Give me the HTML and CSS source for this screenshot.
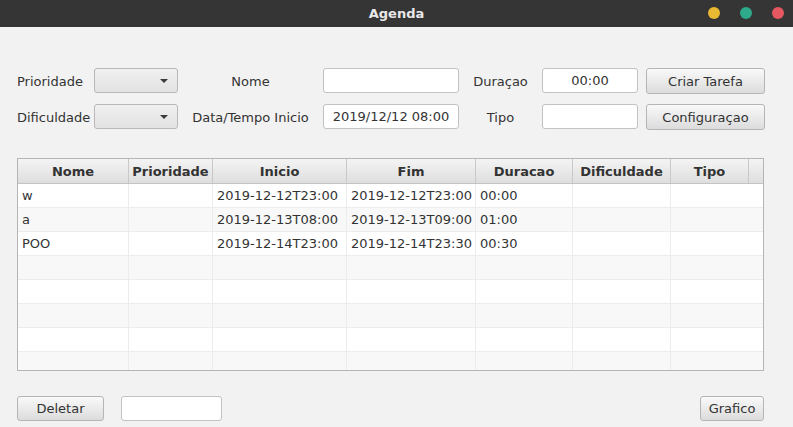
FILE: index.html
```html
<!DOCTYPE html>
<html lang="pt">
<head>
<meta charset="utf-8">
<title>Agenda</title>
<link rel="stylesheet" href="styles.css">
</head>
<body>
<div class="window">
  <header class="titlebar">
    <span class="title">Agenda</span>
    <div class="controls">
      <span class="dot dot-min"></span>
      <span class="dot dot-max"></span>
      <span class="dot dot-close"></span>
    </div>
  </header>

  <main class="content">
    <section class="form">
      <span class="lbl lbl-left">Prioridade</span>
      <div class="combo"><span class="arrow"></span></div>
      <span class="lbl lbl-center">Nome</span>
      <div class="field"></div>
      <span class="lbl lbl-center">Duraçao</span>
      <div class="field">00:00</div>
      <button class="btn">Criar Tarefa</button>

      <span class="lbl lbl-left">Dificuldade</span>
      <div class="combo"><span class="arrow"></span></div>
      <span class="lbl lbl-center">Data/Tempo Inicio</span>
      <div class="field">2019/12/12 08:00</div>
      <span class="lbl lbl-center">Tipo</span>
      <div class="field"></div>
      <button class="btn">Configuraçao</button>
    </section>

    <section class="table">
      <div class="row head">
        <div class="c c1">Nome</div>
        <div class="c c2">Prioridade</div>
        <div class="c c3">Inicio</div>
        <div class="c c4">Fim</div>
        <div class="c c5">Duracao</div>
        <div class="c c6">Dificuldade</div>
        <div class="c c7">Tipo</div>
        <div class="c c8"></div>
      </div>
      <div class="body">
        <div class="row">
          <div class="c c1">w</div><div class="c c2"></div><div class="c c3">2019-12-12T23:00</div><div class="c c4">2019-12-12T23:00</div><div class="c c5">00:00</div><div class="c c6"></div><div class="c c7"></div>
        </div>
        <div class="row odd">
          <div class="c c1">a</div><div class="c c2"></div><div class="c c3">2019-12-13T08:00</div><div class="c c4">2019-12-13T09:00</div><div class="c c5">01:00</div><div class="c c6"></div><div class="c c7"></div>
        </div>
        <div class="row">
          <div class="c c1">POO</div><div class="c c2"></div><div class="c c3">2019-12-14T23:00</div><div class="c c4">2019-12-14T23:30</div><div class="c c5">00:30</div><div class="c c6"></div><div class="c c7"></div>
        </div>
        <div class="row odd">
          <div class="c c1"></div><div class="c c2"></div><div class="c c3"></div><div class="c c4"></div><div class="c c5"></div><div class="c c6"></div><div class="c c7"></div>
        </div>
        <div class="row">
          <div class="c c1"></div><div class="c c2"></div><div class="c c3"></div><div class="c c4"></div><div class="c c5"></div><div class="c c6"></div><div class="c c7"></div>
        </div>
        <div class="row odd">
          <div class="c c1"></div><div class="c c2"></div><div class="c c3"></div><div class="c c4"></div><div class="c c5"></div><div class="c c6"></div><div class="c c7"></div>
        </div>
        <div class="row">
          <div class="c c1"></div><div class="c c2"></div><div class="c c3"></div><div class="c c4"></div><div class="c c5"></div><div class="c c6"></div><div class="c c7"></div>
        </div>
        <div class="row odd">
          <div class="c c1"></div><div class="c c2"></div><div class="c c3"></div><div class="c c4"></div><div class="c c5"></div><div class="c c6"></div><div class="c c7"></div>
        </div>
      </div>
    </section>

    <section class="footer">
      <button class="btn btn-del">Deletar</button>
      <div class="field field-small"></div>
      <span class="spacer"></span>
      <button class="btn btn-graf">Grafico</button>
    </section>
  </main>
</div>
</body>
</html>
```

FILE: styles.css
```css
* { box-sizing: border-box; }

html, body {
  margin: 0;
  padding: 0;
  width: 793px;
  height: 427px;
  overflow: hidden;
  background: #f2f2f2;
  font-family: "DejaVu Sans", "Liberation Sans", sans-serif;
  font-size: 13px;
  color: #333333;
}

.window {
  display: flex;
  flex-direction: column;
  height: 427px;
}

.titlebar {
  height: 27px;
  background: #353535;
  display: flex;
  align-items: center;
  justify-content: center;
  position: relative;
}

.title {
  color: #e8e8e8;
  font-weight: bold;
  font-size: 13px;
}

.controls {
  position: absolute;
  right: 9px;
  top: 7px;
  display: flex;
  gap: 20px;
}

.dot {
  width: 12px;
  height: 12px;
  border-radius: 50%;
  display: block;
}
.dot-min { background: #e9b933; }
.dot-max { background: #2ea98a; }
.dot-close { background: #e5585f; }

.content {
  padding: 41px 29px 0 17px;
  display: flex;
  flex-direction: column;
}

.form {
  display: grid;
  grid-template-columns: 77px 84px 145px 136px 83px 96px 127px;
  grid-template-rows: 26px 26px;
  row-gap: 10px;
  align-items: center;
}

.form .btn { margin-left: 8px; width: 119px; }

.lbl { white-space: nowrap; }
.lbl-left { text-align: left; }
.lbl-center { text-align: center; }

.combo {
  height: 25px;
  width: 84px;
  border: 1px solid #b8b8b8;
  border-radius: 3px;
  background: linear-gradient(#f0f0f0, #e2e2e2);
  position: relative;
  align-self: start;
}
.arrow {
  position: absolute;
  right: 9px;
  top: 10px;
  width: 0;
  height: 0;
  border-left: 4px solid transparent;
  border-right: 4px solid transparent;
  border-top: 4px solid #3a3a3a;
}

.field {
  height: 25px;
  background: #ffffff;
  border: 1px solid #c2c2c2;
  border-radius: 3px;
  display: flex;
  align-items: center;
  justify-content: center;
  white-space: nowrap;
  color: #333;
  align-self: start;
}

.btn {
  height: 26px;
  border: 1px solid #b5b5b5;
  border-radius: 3px;
  background: linear-gradient(#f9f9f9, #dcdcdc);
  font-family: inherit;
  font-size: 13px;
  color: #333;
  padding: 0;
  align-self: start;
}

.table {
  margin-top: 28px;
  width: 747px;
  height: 213px;
  border: 1px solid #b5b5b5;
  background: #ffffff;
  overflow: hidden;
}

.row {
  display: flex;
  height: 24px;
  border-bottom: 1px solid #ececec;
  background: #ffffff;
}
.row.odd { background: #f8f8f8; }

.row.head {
  height: 25px;
  border-bottom: 1px solid #c4c4c4;
  background: linear-gradient(#f4f4f4, #dedede);
  font-weight: bold;
}

.c {
  height: 100%;
  border-right: 1px solid #ececec;
  display: flex;
  align-items: center;
  padding-left: 4px;
  white-space: nowrap;
  overflow: hidden;
}
.head .c {
  border-right: 1px solid #c8c8c8;
  justify-content: center;
  padding-left: 0;
}

.c1 { width: 111px; }
.c2 { width: 84px; }
.c3 { width: 134px; }
.c4 { width: 129px; }
.c5 { width: 97px; }
.c6 { width: 98px; }
.c7 { width: 78px; }
.c8 { flex: 1; }
.head .c8 { border-right: none; }
.body .c7 { border-right: none; }

.footer {
  margin-top: 25px;
  display: flex;
  align-items: flex-start;
}
.btn-del { width: 87px; height: 25px; }
.field-small { width: 101px; margin-left: 17px; }
.spacer { flex: 1; }
.btn-graf { width: 64px; height: 25px; }
```
